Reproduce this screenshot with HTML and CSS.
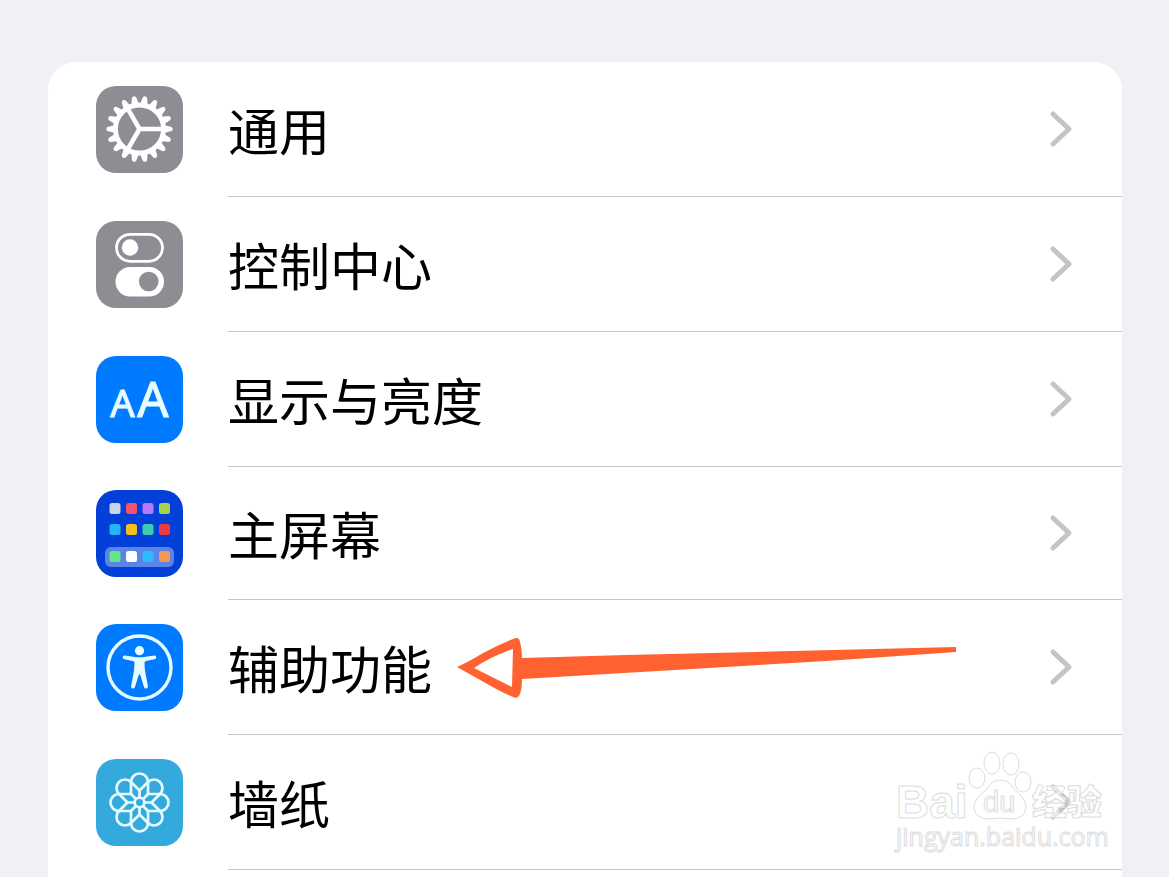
FILE: index.html
```
<!DOCTYPE html>
<html lang="zh-CN">
<head>
    <meta charset="UTF-8">
    <meta name="viewport" content="width=device-width, initial-scale=1.0">
    <title>设置</title>
    <link rel="stylesheet" href="styles.css">
</head>
<body>
    <nav class="settings">
        <a href="#" class="row">
            <svg class="icon" viewBox="0 0 87 87">
                <defs>
                    <path id="teeth" d="M24 -4 L32 -2.1 Q34.4 0 32 2.1 L24 4 Z M-24 -4 L-32 -2.1 Q-34.4 0 -32 2.1 L-24 4 Z"/>
                </defs>
                <rect width="87" height="87" rx="20" fill="#8e8d93"/>
                <g transform="translate(43.5 43)" fill="#fff">
                    <use href="#teeth"/>
                    <use href="#teeth" transform="rotate(20)"/>
                    <use href="#teeth" transform="rotate(40)"/>
                    <use href="#teeth" transform="rotate(60)"/>
                    <use href="#teeth" transform="rotate(80)"/>
                    <use href="#teeth" transform="rotate(100)"/>
                    <use href="#teeth" transform="rotate(120)"/>
                    <use href="#teeth" transform="rotate(140)"/>
                    <use href="#teeth" transform="rotate(160)"/>
                    <circle r="24" fill="none" stroke="#fff" stroke-width="4.8"/>
                    <path d="M0 0 H23 M0 0 L-11.8 -20.4 M0 0 L-11.8 20.4" stroke="#fff" stroke-width="4.6"/>
                </g>
            </svg>
            <span class="body"><span class="label">通用</span><svg class="chevron" viewBox="0 0 24 38"><path d="M4 4 L20 19 L4 34"/></svg></span>
        </a>

        <a href="#" class="row">
            <svg class="icon" viewBox="0 0 87 87">
                <rect width="87" height="87" rx="20" fill="#8e8d93"/>
                <rect x="20.5" y="13.3" width="46" height="27" rx="13.5" fill="none" stroke="#fff" stroke-width="2.8"/>
                <circle cx="34" cy="26.5" r="8.2" fill="#fff"/>
                <rect x="19.5" y="46" width="48.5" height="29.5" rx="14.7" fill="#fff"/>
                <circle cx="52.7" cy="60.5" r="9.8" fill="#8e8d93"/>
            </svg>
            <span class="body"><span class="label">控制中心</span><svg class="chevron" viewBox="0 0 24 38"><path d="M4 4 L20 19 L4 34"/></svg></span>
        </a>

        <a href="#" class="row">
            <svg class="icon" viewBox="0 0 87 87">
                <rect width="87" height="87" rx="20" fill="#007aff"/>
                <g class="letters">
                    <text x="26.5" y="61" font-size="38" text-anchor="middle">A</text>
                    <text x="57" y="61" font-size="49" text-anchor="middle">A</text>
                </g>
            </svg>
            <span class="body"><span class="label">显示与亮度</span><svg class="chevron" viewBox="0 0 24 38"><path d="M4 4 L20 19 L4 34"/></svg></span>
        </a>

        <a href="#" class="row short">
            <svg class="icon" viewBox="0 0 87 87">
                <rect width="87" height="87" rx="20" fill="#0340d8"/>
                <rect x="9" y="57" width="69" height="20" rx="6" fill="#5c83e8"/>
                <rect x="13.5" y="13" width="11" height="11" rx="2.5" fill="#c9d5e6"/>
                <rect x="30" y="13" width="11" height="11" rx="2.5" fill="#f4516c"/>
                <rect x="46.5" y="13" width="11" height="11" rx="2.5" fill="#b678f8"/>
                <rect x="63" y="13" width="11" height="11" rx="2.5" fill="#a9d147"/>
                <rect x="13.5" y="34" width="11" height="11" rx="2.5" fill="#25b3fb"/>
                <rect x="30" y="34" width="11" height="11" rx="2.5" fill="#f8bd1f"/>
                <rect x="46.5" y="34" width="11" height="11" rx="2.5" fill="#3fcbb0"/>
                <rect x="63" y="34" width="11" height="11" rx="2.5" fill="#ee3b3d"/>
                <rect x="13.5" y="61" width="11" height="11" rx="2.5" fill="#5fe888"/>
                <rect x="30" y="61" width="11" height="11" rx="2.5" fill="#fff"/>
                <rect x="46.5" y="61" width="11" height="11" rx="2.5" fill="#2bbcfb"/>
                <rect x="63" y="61" width="11" height="11" rx="2.5" fill="#f19a55"/>
            </svg>
            <span class="body"><span class="label">主屏幕</span><svg class="chevron" viewBox="0 0 24 38"><path d="M4 4 L20 19 L4 34"/></svg></span>
        </a>

        <a href="#" class="row">
            <svg class="icon" viewBox="0 0 87 87">
                <rect width="87" height="87" rx="20" fill="#007aff"/>
                <g fill="#e6fcff">
                    <circle cx="43.5" cy="43.5" r="31.5" fill="none" stroke="#e6fcff" stroke-width="3.4"/>
                    <circle cx="43.5" cy="26.7" r="4.6"/>
                    <path d="M28.6 31.6 L39 33 Q43.5 33.5 48 33 L58.4 31.6 Q60.4 31.8 60.3 33.5 Q60.2 35 58.6 35.3 L50 37 Q48.5 37.4 48.5 39 Q48.6 45 49.6 50 L51.9 62 Q52 64 50.4 64.5 Q48.6 64.8 48 63 L44.3 51 Q43.5 49.5 42.7 51 L39 63 Q38.4 64.8 36.6 64.5 Q35 64 35.1 62 L37.4 50 Q38.4 45 38.5 39 Q38.5 37.4 37 37 L28.4 35.3 Q26.8 35 26.7 33.5 Q26.6 31.8 28.6 31.6 Z"/>
                </g>
            </svg>
            <span class="body">
                <span class="label">辅助功能</span>
                <svg class="arrow" viewBox="0 0 502 64">
                    <path fill="#ff6230" fill-rule="evenodd" d="M1 30 Q16 23 27 16 Q42 8 57 2 Q63 -1 64 5 Q66 12 66 21 L170 18 L300 15 L500 10 V15 L370 24 L66 42 Q66 54 63 59 Q61 62 57 60 L48 56 Q38 51 26 44 Z M18 31 Q32 38 56 50 L57 12 Q36 19 18 31 Z"/>
                </svg>
                <svg class="chevron" viewBox="0 0 24 38"><path d="M4 4 L20 19 L4 34"/></svg>
            </span>
        </a>

        <a href="#" class="row">
            <svg class="icon" viewBox="0 0 87 87">
                <defs>
                    <path id="petal" d="M-8.5 -8.5 V-20.5 A8.5 8.5 0 0 1 8.5 -20.5 V-8.5 M0 -12 V-5"/>
                </defs>
                <rect width="87" height="87" rx="20" fill="#34aadc"/>
                <g transform="translate(43.5 43.5)" fill="none" stroke="#e4fbff" stroke-width="2.7">
                    <circle r="4.8"/>
                    <use href="#petal"/>
                    <use href="#petal" transform="rotate(45)"/>
                    <use href="#petal" transform="rotate(90)"/>
                    <use href="#petal" transform="rotate(135)"/>
                    <use href="#petal" transform="rotate(180)"/>
                    <use href="#petal" transform="rotate(225)"/>
                    <use href="#petal" transform="rotate(270)"/>
                    <use href="#petal" transform="rotate(315)"/>
                </g>
            </svg>
            <span class="body">
                <span class="label">墙纸</span>
                <svg class="chevron" viewBox="0 0 24 38"><path d="M4 4 L20 19 L4 34"/></svg>
                <svg class="watermark" viewBox="0 0 218 110">
                    <text class="latin" x="4" y="69" font-size="46">Bai</text>
                    <ellipse cx="85" cy="29" rx="8" ry="10"/>
                    <ellipse cx="100" cy="14" rx="8" ry="11"/>
                    <ellipse cx="119" cy="15" rx="8" ry="11"/>
                    <ellipse cx="131" cy="33" rx="8" ry="10"/>
                    <path d="M108 31 Q117 31 122 40 Q134 50 134 58 Q133 70 119 70 Q108 68 97 70 Q82 69 82 58 Q82 50 95 40 Q100 31 108 31 Z"/>
                    <text class="du" x="91" y="63" font-size="29">du</text>
                    <text class="hans" x="140" y="66" font-size="35">经验</text>
                    <text class="site" x="4" y="97" font-size="25">jingyan.baidu.com</text>
                </svg>
            </span>
        </a>
    </nav>
</body>
</html>
```
FILE: styles.css
```
* {
    box-sizing: border-box;
}
body {
    display: flex;
    min-height: 100vh;
    margin: 0;
    padding: 62px 47px 0 48px;
    background: #f0f0f5;
    font-family: "Noto Sans CJK SC", sans-serif;
}
.settings {
    flex: 1;
    background: #fff;
    border-radius: 28px 28px 0 0;
}
.row {
    display: flex;
    align-items: center;
    gap: 45px;
    height: 135px;
    padding-left: 48px;
    color: #000;
    text-decoration: none;
}
.row.short {
    height: 133px;
}
.icon {
    flex: none;
    width: 87px;
    height: 87px;
}
.letters {
    fill: #e6fcff;
    stroke: #e6fcff;
    stroke-width: 1;
    stroke-linejoin: round;
    font-family: "Noto Sans", sans-serif;
}
.body {
    position: relative;
    display: flex;
    flex: 1;
    align-items: center;
    justify-content: space-between;
    height: 100%;
    padding-right: 49px;
    border-bottom: 1px solid #c6c6c8;
}
.label {
    padding-bottom: 1px;
    font-size: 51px;
    line-height: 72px;
}
.chevron {
    width: 24px;
    height: 38px;
    fill: none;
    stroke: #c4c4c6;
    stroke-width: 5;
    stroke-linecap: round;
    stroke-linejoin: round;
}
.arrow {
    position: absolute;
    top: 37px;
    left: 228px;
    width: 502px;
    height: 64px;
}
.watermark {
    position: absolute;
    top: 14px;
    right: 12px;
    width: 218px;
    height: 110px;
    fill: rgba(255, 255, 255, 0.6);
    stroke: #dcdcdc;
    stroke-width: 1;
}
.latin {
    font-family: "Liberation Sans", sans-serif;
    font-weight: bold;
}
.du {
    font-family: "Liberation Sans", sans-serif;
}
.hans {
    font-weight: 900;
}
.site {
    font-family: "Open Sans", sans-serif;
}
```
